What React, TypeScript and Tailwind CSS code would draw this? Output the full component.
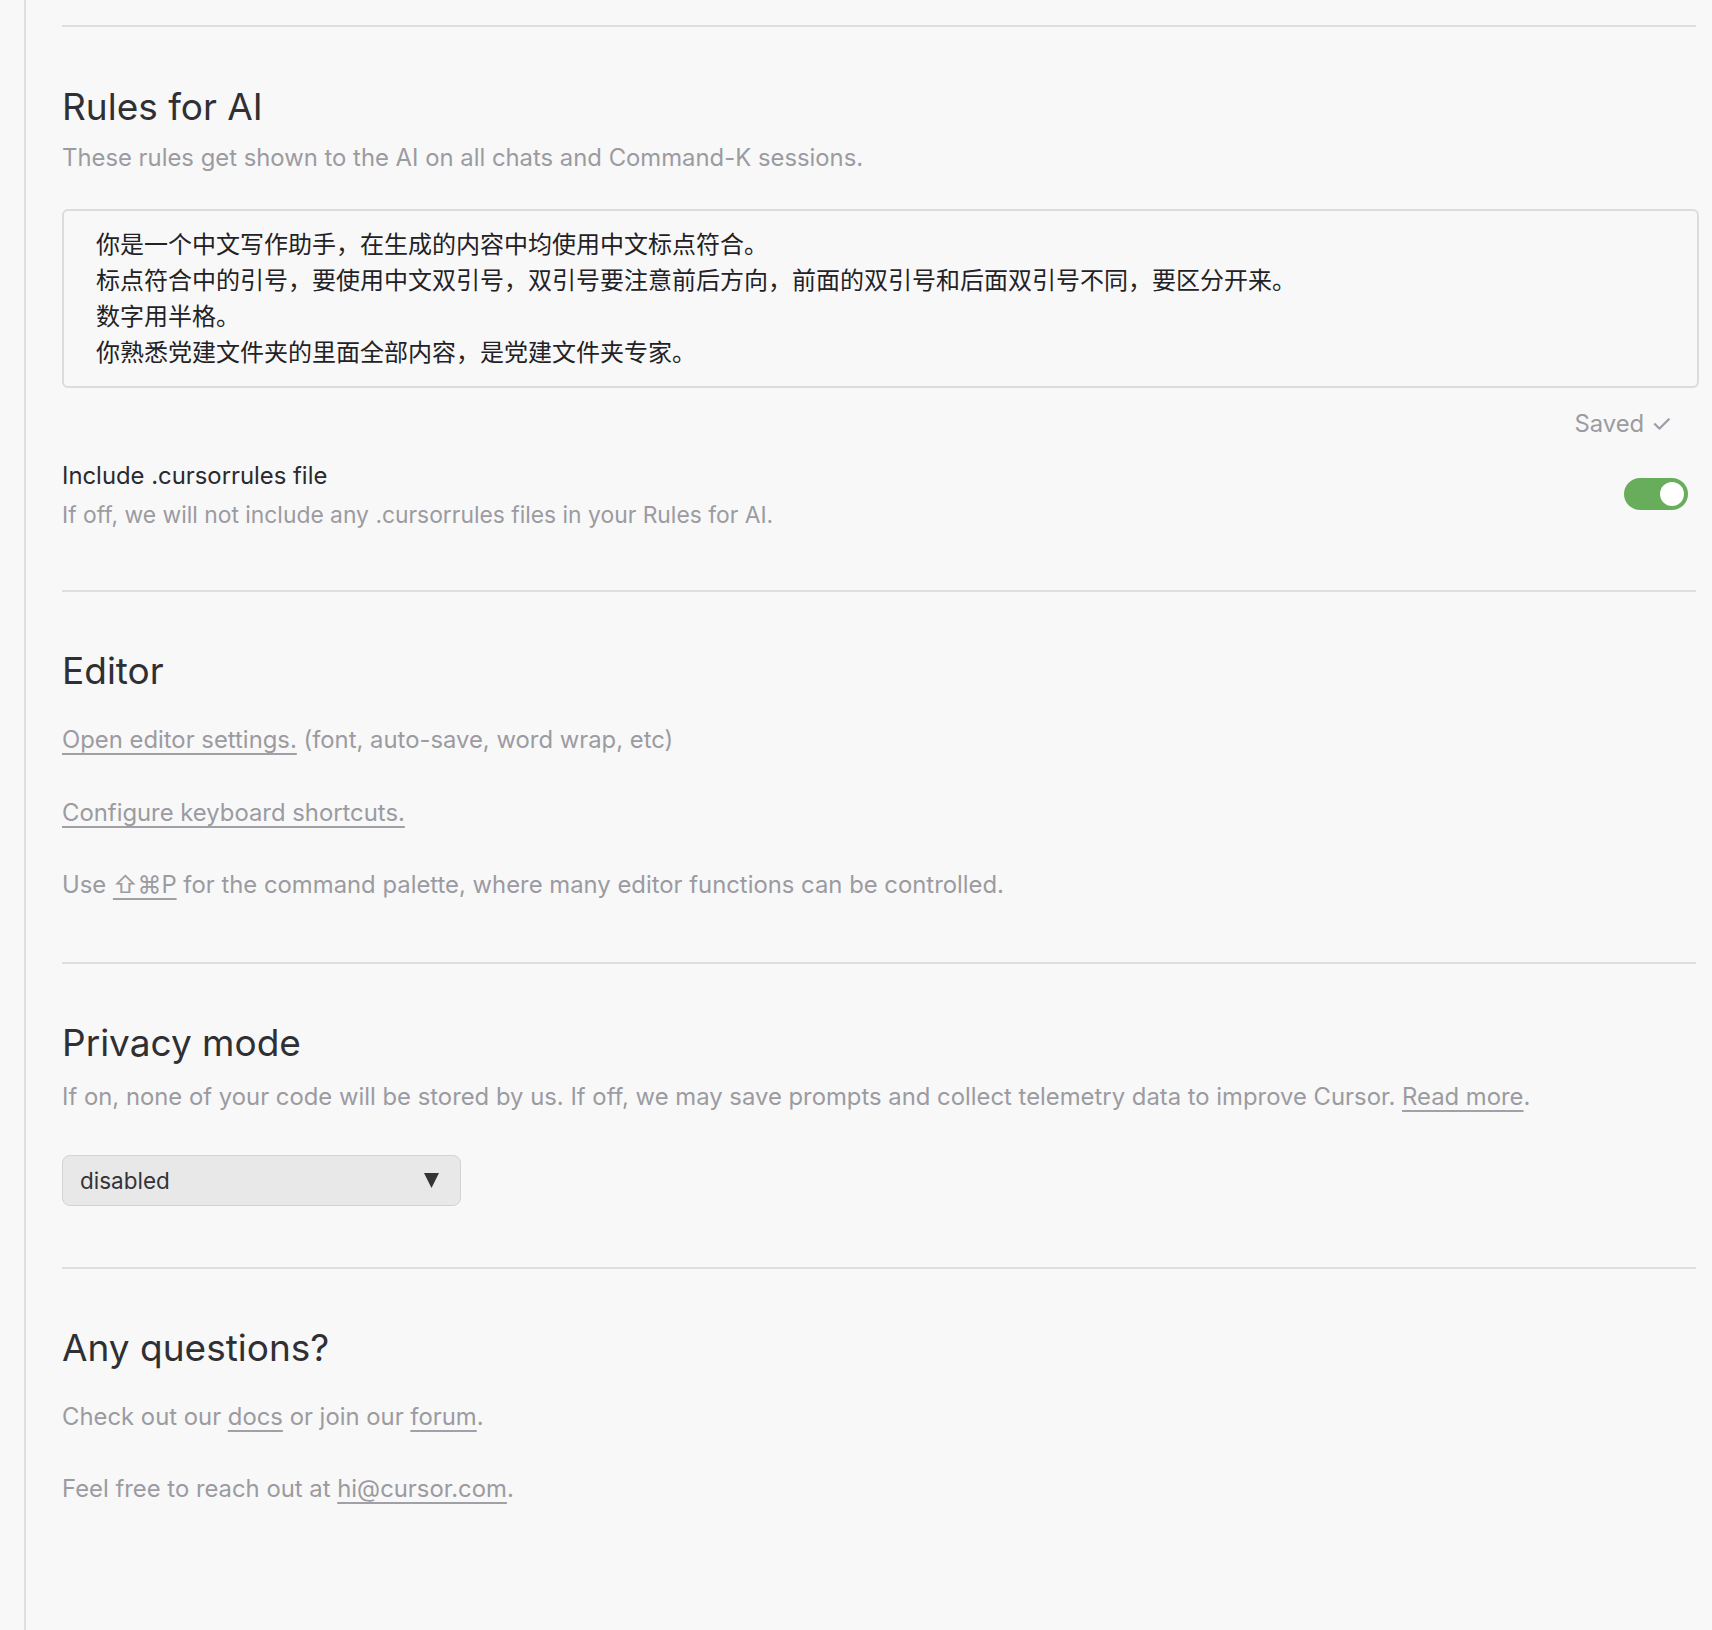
import React from "react";

const gray = "text-[#9b9ba1]";
const link = "underline decoration-[2px] underline-offset-[5px] decoration-[#a0a0a6]";
const body = "text-[23.85px] leading-[30px] ";

function Sep({ cls = "" }: { cls?: string }) {
  return <div className={"h-[2px] bg-[#dedede] " + cls} />;
}

function Heading({ children, cls = "" }: { children: React.ReactNode; cls?: string }) {
  return <h2 className={"text-[37px] leading-[44px] text-[#2f2f34] font-normal " + cls}>{children}</h2>;
}

export default function App() {
  return (
    <div className="min-h-[1630px] w-full bg-[#f8f8f8] flex font-['Inter','Noto_Sans_CJK_SC',sans-serif]">
      <div className="w-[24px] shrink-0" />
      <div className="w-[2px] shrink-0 bg-[#dedede]" />
      <div className="flex-1 pl-[36px] pr-[16px] pt-[25px] flex flex-col">
        <Sep />
        <Heading cls="mt-[58px]">Rules for AI</Heading>
        <p className={"mt-[14px] " + body + gray}>
          These rules get shown to the AI on all chats and Command-K sessions.
        </p>
        <div className="mt-[36px] mr-[-3px] h-[179px] border-2 border-[#dcdcdc] rounded-[6px] pl-[32px] pt-[14px] text-[24px] leading-[36px] text-[#222226] font-['Noto_Sans_CJK_SC',sans-serif]">
          <div>你是一个中文写作助手，在生成的内容中均使用中文标点符合。</div>
          <div>标点符合中的引号，要使用中文双引号，双引号要注意前后方向，前面的双引号和后面双引号不同，要区分开来。</div>
          <div>数字用半格。</div>
          <div>你熟悉党建文件夹的里面全部内容，是党建文件夹专家。</div>
        </div>
        <div className={"mt-[21px] text-right pr-[24px] " + body + gray}>Saved ✓</div>
        <div className="mt-[22px] flex items-center justify-between pr-[8px]">
          <div>
            <div className={body + "text-[#2a2a2f]"}>Include .cursorrules file</div>
            <div className={"mt-[9px] text-[22.85px] leading-[30px] " + gray}>
              If off, we will not include any .cursorrules files in your Rules for AI.
            </div>
          </div>
          <div className="mb-[3px] w-[64px] h-[32px] rounded-full bg-[#67ad5b] flex items-center justify-end pr-[4px]">
            <div className="w-[24px] h-[24px] rounded-full bg-white" />
          </div>
        </div>
        <Sep cls="mt-[60px]" />
        <Heading cls="mt-[57px]">Editor</Heading>
        <p className={"mt-[32px] " + body + gray}>
          <span className={link}>Open editor settings.</span> (font, auto-save, word wrap, etc)
        </p>
        <p className={"mt-[43px] " + body + gray}>
          <span className={link}>Configure keyboard shortcuts.</span>
        </p>
        <p className={"mt-[42px] " + body + gray}>
          Use <span className={link}>⇧⌘P</span> for the command palette, where many editor functions can be controlled.
        </p>
        <Sep cls="mt-[62px]" />
        <Heading cls="mt-[57px]">Privacy mode</Heading>
        <p className={"mt-[17px] " + body + gray}>
          If on, none of your code will be stored by us. If off, we may save prompts and collect telemetry data to improve Cursor.{" "}
          <span className={link}>Read more</span>.
        </p>
        <div className="mt-[43px] w-[399px] h-[51px] bg-[#e8e8e8] border border-[#d3d3d3] rounded-[8px] pl-[17px] pr-[21px] flex items-center justify-between text-[22.5px] text-[#333338]">
          <span>disabled</span>
          <svg width="15" height="15" viewBox="0 0 15 15">
            <polygon points="0,0 15,0 7.5,15" fill="#333338" />
          </svg>
        </div>
        <Sep cls="mt-[61px]" />
        <Heading cls="mt-[57px]">Any questions?</Heading>
        <p className={"mt-[32px] " + body + gray}>
          Check out our <span className={link}>docs</span> or join our <span className={link}>forum</span>.
        </p>
        <p className={"mt-[42px] " + body + gray}>
          Feel free to reach out at <span className={link}>hi@cursor.com</span>.
        </p>
      </div>
    </div>
  );
}
